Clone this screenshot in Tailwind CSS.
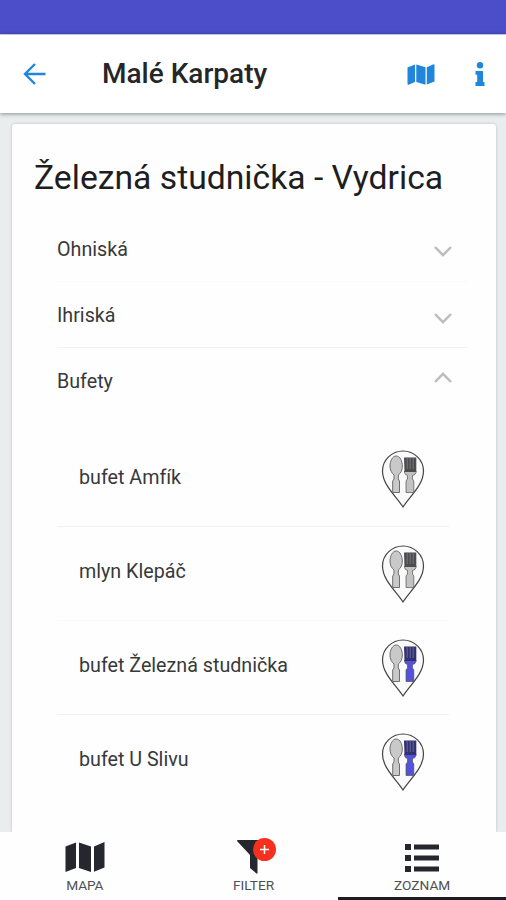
<!DOCTYPE html>
<html lang="sk">
<head>
<meta charset="utf-8">
<title>Malé Karpaty</title>
<script src="https://cdn.jsdelivr.net/npm/@tailwindcss/browser@4"></script>
</head>
<body class="w-[506px] h-[900px] overflow-hidden bg-[#e9edee] font-['Roboto',sans-serif] text-[#38393b] flex flex-col">
<svg class="hidden">
  <symbol id="map" viewBox="0 0 40 30"><path d="M.5 4.500 11 .5V26L.5 30ZM14 .5 26 4.500V30L14 26ZM29 4.500 39.500 0V25.500L29 29.700Z"/></symbol>
  <symbol id="pin" viewBox="0 0 44 58">
    <path d="M22 57C15 46 1.500 35 1.500 21A20.500 20 0 0 1 42.500 21C42.500 35 29 46 22 57Z" fill="#fafafa" stroke="#444" stroke-width="1.200"/>
    <path d="M15.200 6C11.500 6 9 11 9 16C9 20 10.500 23 13 25V29L11.700 31V42.500H18.500V31L17.300 29V25C20 23 21.300 20 21.300 16C21.300 11 19 6 15.200 6Z" fill="#c9c9c9" stroke="#6d6d6d"/>
    <path d="M23.500 21H35V22.500Q34.500 25 31.500 25.500V29L32.800 31V42.500H25V31L26.500 29V25.500Q24 25 23.500 22.500Z" fill="currentColor" stroke="#555" stroke-width=".7"/>
  </symbol>
  <symbol id="tines" viewBox="0 0 44 58">
    <path d="M23 7.500H35.300V22H23.500Z" fill="currentColor"/>
    <path d="M26.200 7V19M29.200 7V19M32.200 7V19" stroke="#85859c" stroke-width=".7"/>
  </symbol>
</svg>
<div class="h-[34px] shrink-0 bg-[#4c4dc8]"></div>
<header class="relative h-[79px] shrink-0 bg-white border-t border-[#c3c3ea] shadow-[0_1px_4px_rgba(0,0,0,0.4)] flex items-center pl-[23px] pr-[21px]">
  <svg class="w-[23px] h-[22px]" viewBox="0 0 23 22" fill="none" stroke="#1f86dc" stroke-width="2.400"><path d="M22.500 11H2M12 1 2 11 12 21"/></svg>
  <h1 class="ml-[56px] -mt-px text-[28px] font-medium leading-8 text-[#252628] whitespace-nowrap">Malé Karpaty</h1>
  <svg class="ml-auto w-[28px] h-[21px] fill-[#1f86dc]" viewBox="0 0 28 21"><path d="M.5 3.500 8 .5V18L1.500 20.700Q.5 21 .5 20ZM9.300.5 18.500 3.300V20.800L9.300 18ZM19.800 3.300 26.500.3Q27.500 0 27.500 1V17.500L19.800 20.500Z"/></svg>
  <svg class="ml-[40px] w-[10px] h-[24px] fill-[#1f86dc]" viewBox="0 0 10 24"><circle cx="5" cy="3.300" r="3.200"/><path d="M.5 9H8V20H9.500V24H.5V20H2.200V12.800H.5Z"/></svg>
</header>
<main class="mt-[11px] ml-[12px] w-[484px] h-[708px] shrink-0 bg-[#fefefe] rounded-t-[3px] shadow-[0_0_3px_rgba(0,0,0,0.22)]">
  <h2 class="pl-[22px] pt-[32px] h-[91px] text-[33.7px] leading-[44px] text-[#1e1e1f] whitespace-nowrap">Železná studnička - Vydrica</h2>
  <section class="ml-[45px] text-[19.7px]">
    <div class="w-[411px] h-[67px] border-b border-[#f9f9f9] flex items-center justify-between pr-[16px]"><span class="mt-[3px]">Ohniská</span><svg class="mt-[7px] w-[18px] h-[11px]" viewBox="0 0 18 11" fill="none" stroke="#bdbdbd" stroke-width="2.500"><path d="M1 1 9 9.200 17 1"/></svg></div>
    <div class="w-[411px] h-[66px] border-b border-[#f3f3f3] flex items-center justify-between pr-[16px]"><span class="mt-[2px]">Ihriská</span><svg class="mt-[7px] w-[18px] h-[11px]" viewBox="0 0 18 11" fill="none" stroke="#bdbdbd" stroke-width="2.500"><path d="M1 1 9 9.200 17 1"/></svg></div>
    <div class="w-[411px] h-[66px] flex items-center justify-between pr-[16px]"><span class="mt-[2px]">Bufety</span><svg class="-mt-[7px] w-[18px] h-[11px]" viewBox="0 0 18 11" fill="none" stroke="#bdbdbd" stroke-width="2.500"><path d="M1 10 9 1.800 17 10"/></svg></div>
    <ul class="mt-[18px] w-[392px]">
      <li class="h-[95px] border-b border-[#f0f0f0] pl-[22px] pr-[24px] flex items-center justify-between"><span class="-mt-[2px]">bufet Amfík</span><svg class="w-[44px] h-[58px] text-[#c2c2c2]"><use href="#pin"/><use href="#tines" class="text-[#4d4d4d]"/></svg></li>
      <li class="h-[94px] border-b border-[#f9f9f9] pl-[22px] pr-[24px] flex items-center justify-between"><span class="-mt-[3px]">mlyn Klepáč</span><svg class="w-[44px] h-[58px] text-[#c2c2c2]"><use href="#pin"/><use href="#tines" class="text-[#4d4d4d]"/></svg></li>
      <li class="h-[94px] border-b border-[#f0f0f0] pl-[22px] pr-[24px] flex items-center justify-between"><span class="-mt-[3px]">bufet Železná studnička</span><svg class="w-[44px] h-[58px] text-[#5552da]"><use href="#pin"/><use href="#tines" class="text-[#303075]"/></svg></li>
      <li class="h-[94px] pl-[22px] pr-[24px] flex items-center justify-between"><span class="-mt-[4px]">bufet U Slivu</span><svg class="-mt-px w-[44px] h-[58px] text-[#5552da]"><use href="#pin"/><use href="#tines" class="text-[#303075]"/></svg></li>
    </ul>
  </section>
</main>
<nav class="relative h-[68px] shrink-0 bg-[#fefefe] grid grid-cols-3 text-[13.7px] leading-4 text-[#505054]">
  <a class="flex flex-col items-center pt-[10px] pl-px"><svg class="w-[40px] h-[30px] fill-[#25262e]"><use href="#map"/></svg><span class="mt-[5px] tracking-[-0.1px]">MAPA</span></a>
  <a class="relative flex flex-col items-center pt-[8px] pl-px"><svg class="w-[33px] h-[34px] fill-[#25262e]" viewBox="0 0 33 34"><path d="M0 1Q0 0 1 0H33L20.500 15V33Q20.500 34 19.500 33.500L13 28V15Z"/></svg><span class="mt-[3px]">FILTER</span><span class="absolute left-[84px] top-[6px] size-[23px] rounded-full bg-[#f5301f] flex items-center justify-center"><svg class="size-[9px]" viewBox="0 0 9 9" stroke="#fff" stroke-width="1.500"><path d="M4.500 0V9M0 4.500H9"/></svg></span></a>
  <a class="flex flex-col items-center pt-[12px] ml-px border-b-[3px] border-[#1e1b24]"><svg class="w-[34px] h-[28px] fill-[#25262e]" viewBox="0 0 34 28"><path d="M0 0H6V6H0ZM0 11H6V17H0ZM0 22H6V28H0Z"/><path d="M9 .5H34V5.500H9ZM9 11.500H34V16.500H9ZM9 22.500H34V27.500H9Z"/></svg><span class="mt-[5px]">ZOZNAM</span></a>
</nav>
</body>
</html>
